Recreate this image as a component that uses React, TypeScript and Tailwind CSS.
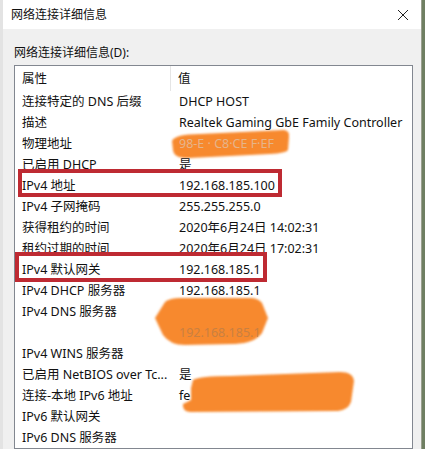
import React from "react";

type Row = { k: string; v: string; faint?: string };

const rows: Row[] = [
  { k: "连接特定的 DNS 后缀", v: "DHCP HOST" },
  { k: "描述", v: "Realtek Gaming GbE Family Controller" },
  { k: "物理地址", v: "98-E  · C8·CE   F·EF", faint: "text-[#e6b48a]" },
  { k: "已启用 DHCP", v: "是" },
  { k: "IPv4 地址", v: "192.168.185.100" },
  { k: "IPv4 子网掩码", v: "255.255.255.0" },
  { k: "获得租约的时间", v: "2020年6月24日 14:02:31" },
  { k: "租约过期的时间", v: "2020年6月24日 17:02:31" },
  { k: "IPv4 默认网关", v: "192.168.185.1" },
  { k: "IPv4 DHCP 服务器", v: "192.168.185.1" },
  { k: "IPv4 DNS 服务器", v: "" },
  { k: "", v: "192.168.185.1", faint: "text-[#c98041]" },
  { k: "IPv4 WINS 服务器", v: "" },
  { k: "已启用 NetBIOS over Tc...", v: "是" },
  { k: "连接-本地 IPv6 地址", v: "fe" },
  { k: "IPv6 默认网关", v: "" },
  { k: "IPv6 DNS 服务器", v: "" },
];

export default function App() {
  return (
    <div
      className="relative w-[425px] h-[449px] overflow-hidden flex bg-[#f0f0f0] text-[#111]"
      style={{ fontFamily: '"Noto Sans", "Noto Sans CJK SC", sans-serif' }}
    >
      <div className="flex-1 flex flex-col border-l-[3px] border-[#e3e3e3]">
        <div className="h-[29px] bg-white flex items-center justify-between pl-[8px] pr-[12px] shrink-0">
          <span className="text-[12px] pt-[1px]">网络连接详细信息</span>
          <svg width="12" height="12" viewBox="0 0 12 12">
            <path d="M1 1 L11 11 M11 1 L1 11" stroke="#222" strokeWidth="1" />
          </svg>
        </div>
        <div className="flex-1 flex flex-col pl-[11px] pr-[8px]">
          <div className="h-[36px] flex items-center pt-[12px] text-[12px]">网络连接详细信息(D):</div>
          <div className="flex-1 bg-white border border-[#828790] text-[12.5px]">
            <div className="h-[25px] grid grid-cols-[156px_1fr]">
              <div className="flex items-center pl-[7px] pt-[2px] border-r border-[#e5e5e5]">属性</div>
              <div className="flex items-center pl-[7px] pt-[2px]">值</div>
            </div>
            {rows.map((r, i) => (
              <div key={i} className="h-[21px] grid grid-cols-[157px_1fr]">
                <div className="flex items-center pl-[7px] pt-[1px] whitespace-nowrap overflow-hidden">{r.k}</div>
                <div className="flex items-center pl-[7px] pt-[1px] whitespace-nowrap overflow-hidden">
                  <span className={"relative z-10 " + (r.faint ?? "")}>{r.v}</span>
                </div>
              </div>
            ))}
          </div>
        </div>
      </div>
      <div className="w-[4px] bg-[#6f7f62] border-l border-[#9aa08f]" />

      <svg className="absolute left-0 top-0 pointer-events-none" width="425" height="449" viewBox="0 0 425 449">
        <defs>
          <filter id="soft" x="-10%" y="-30%" width="120%" height="160%">
            <feGaussianBlur stdDeviation="0.8" />
          </filter>
        </defs>
        <g filter="url(#soft)" fill="#f7892e">
          <path d="M172,141 Q175,134 200,134 L284,130 Q290,131 289,137 L288,150 Q286,153 270,154 L190,158 Q174,159 173,150 Z" />
          <path d="M155,318 L165,302 Q170,298 180,298 L250,298 Q258,298 262,303 L268,318 L262,333 Q255,343 235,344 L185,345 Q170,345 163,335 Z" />
          <path d="M193,380 Q200,376 230,376 L340,372 Q353,372 354,381 L351,402 Q348,410 338,411 L190,412 Q182,411 183,404 L191,400 L191,388 Z" />
        </g>
      </svg>
      <svg className="absolute left-0 top-0 pointer-events-none z-20" width="425" height="449" viewBox="0 0 425 449">
        <rect x="20" y="171" width="260" height="24" fill="none" stroke="#be2a32" strokeWidth="4" />
        <rect x="17" y="254" width="248" height="26" fill="none" stroke="#be2a32" strokeWidth="4" />
      </svg>
    </div>
  );
}
